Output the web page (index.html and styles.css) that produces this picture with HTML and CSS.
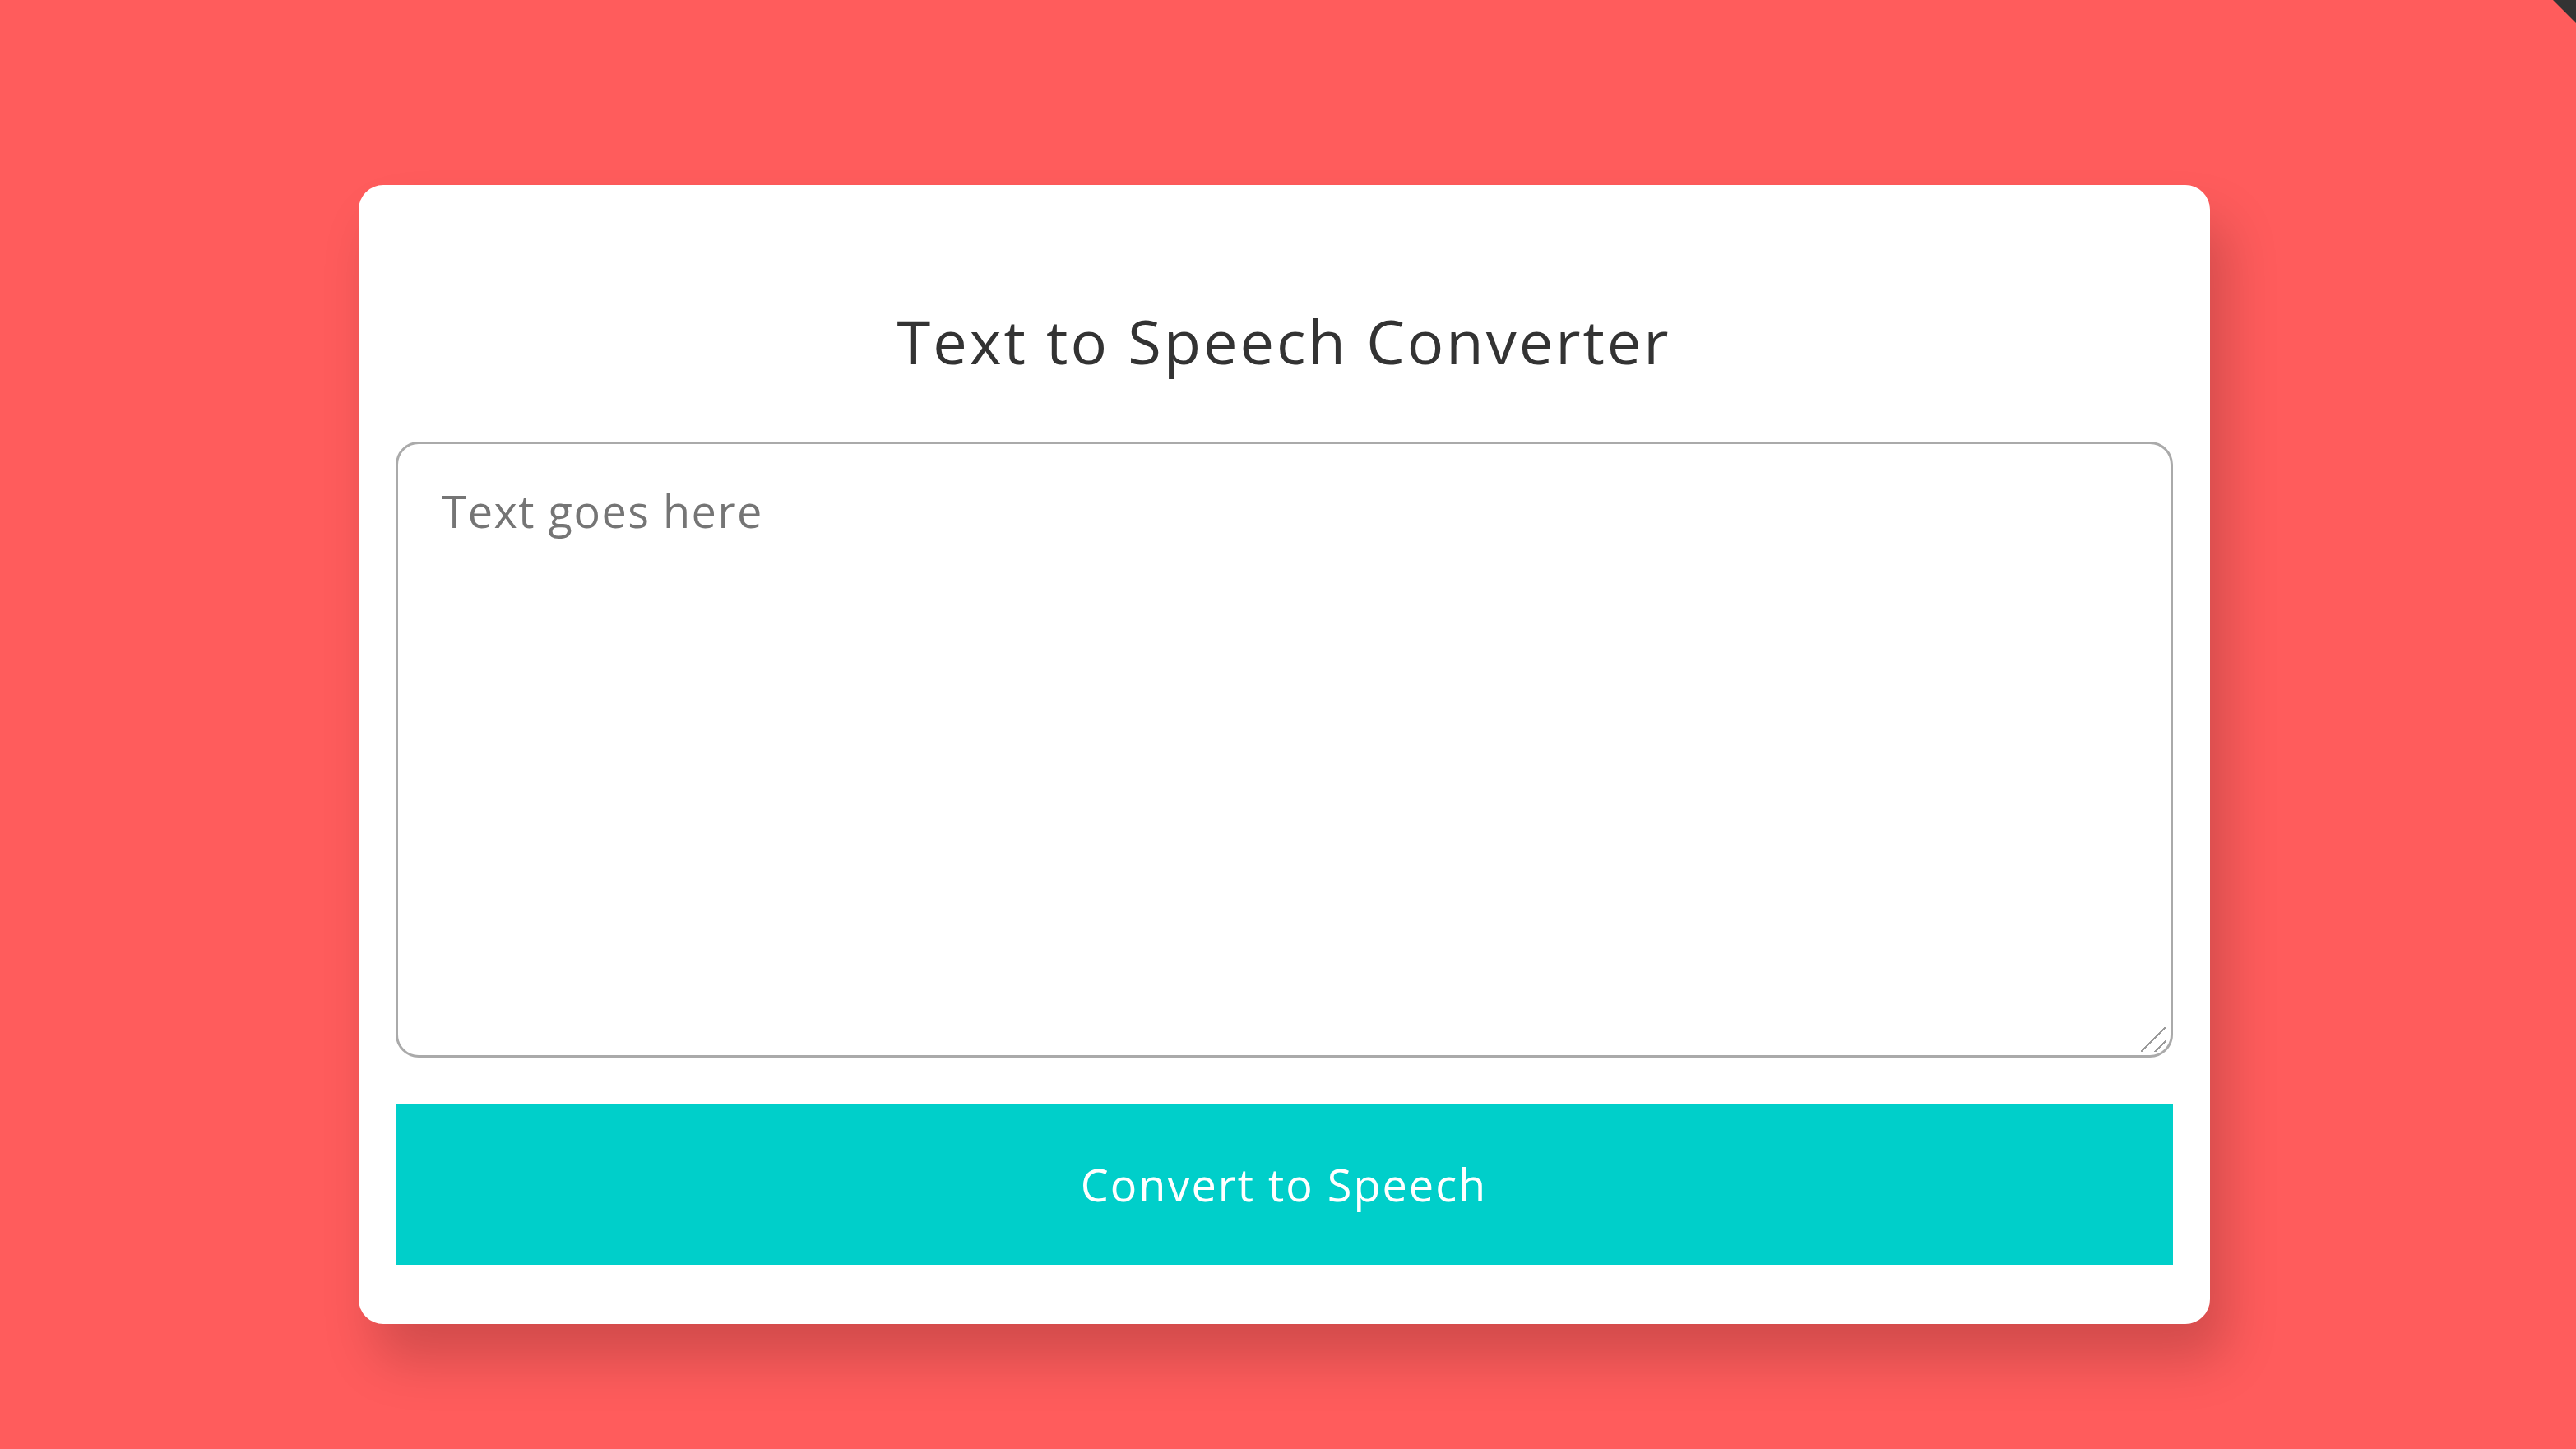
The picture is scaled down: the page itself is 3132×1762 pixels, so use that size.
FILE: index.html
```html
<!DOCTYPE html>
<html lang="en">
<head>
<meta charset="utf-8">
<title>Text to Speech Converter</title>
<link rel="stylesheet" href="styles.css">
</head>
<body>
<svg class="corner" width="28" height="28" viewBox="0 0 28 28" aria-hidden="true"><polygon points="0,0 28,0 28,28" fill="#333"/></svg>
<main class="card">
  <h1 class="title">Text to Speech Converter</h1>
  <div class="field">
    <textarea class="input" placeholder="Text goes here"></textarea>
  </div>
  <button class="convert" type="button">Convert to Speech</button>
</main>
</body>
</html>
```
FILE: styles.css
```css
html, body {
  margin: 0;
  padding: 0;
}
body {
  background: #ff5c5c;
  min-height: 1762px;
  display: flex;
  justify-content: center;
  align-items: flex-start;
  padding-right: 10px;
  box-sizing: border-box;
  font-family: "Open Sans", "Noto Sans", sans-serif;
  overflow: hidden;
}
.corner {
  position: absolute;
  top: 0;
  right: 0;
}
.card {
  margin-top: 225px;
  width: 2251px;
  box-sizing: border-box;
  background: #fff;
  border-radius: 30px;
  padding: 94px 45px 72px;
  display: flex;
  flex-direction: column;
  box-shadow: 20px 44px 64px rgba(0, 0, 0, 0.18);
}
.title {
  margin: 46px 0 71px;
  text-align: center;
  font-size: 74px;
  font-weight: 500;
  letter-spacing: 3px;
  color: #333;
  line-height: 1.362;
}
.field {
  position: relative;
}
.field::after {
  content: "";
  position: absolute;
  right: 9px;
  bottom: 7px;
  width: 30px;
  height: 30px;
  pointer-events: none;
  background:
    linear-gradient(135deg, transparent 0 calc(50% - 1px), #9a9a9a calc(50% - 1px) calc(50% + 1px), transparent calc(50% + 1px)),
    linear-gradient(135deg, transparent 0 calc(78% - 1px), #9a9a9a calc(78% - 1px) calc(78% + 1px), transparent calc(78% + 1px));
}
.input {
  display: block;
  width: 100%;
  height: 749px;
  box-sizing: border-box;
  border: 3px solid #aaa;
  border-radius: 28px;
  padding: 44px 54px;
  font-family: "Open Sans", "Noto Sans", sans-serif;
  font-size: 54px;
  letter-spacing: 1.5px;
  color: #333;
  resize: none;
  outline: none;
}
.input::placeholder {
  color: #757575;
}
.convert {
  margin-top: 56px;
  height: 196px;
  border: none;
  background: #00cfca;
  color: #fff;
  font-family: "Open Sans", "Noto Sans", sans-serif;
  font-size: 54px;
  letter-spacing: 2px;
  cursor: pointer;
}
```
